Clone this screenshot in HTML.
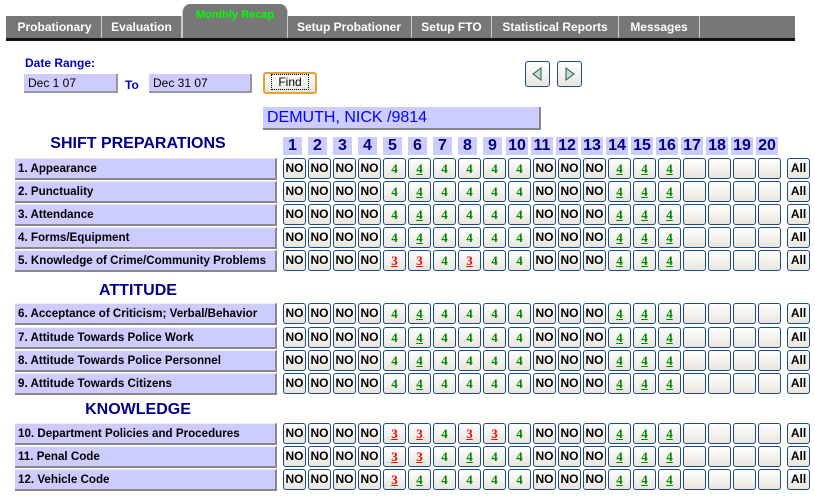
<!DOCTYPE html>
<html><head><meta charset="utf-8"><style>
body{margin:0;width:815px;height:497px;background:#fff;position:relative;overflow:hidden;font-family:"Liberation Sans",sans-serif}
.a{position:absolute}
.tabbar{left:6px;top:16px;width:789px;height:22px;background:#777;border-bottom:3px solid #111}
.tab{position:absolute;top:16px;height:22px;color:#fff;font-weight:bold;font-size:12px;line-height:22px;text-align:center;border-right:1px solid #ccc}
.lbl{position:absolute;left:15px;width:257px;height:19px;background:#ccf;border-right:2px solid #888;border-bottom:2px solid #888;border-top:1px solid #eee;font-weight:bold;font-size:11.6px;line-height:19px;padding-left:3px;box-sizing:content-box;color:#000;white-space:nowrap}
.row{position:absolute;left:283px;display:flex;gap:2px}
.row b{display:block;width:21px;height:19px;border:1px solid #1c4a86;border-radius:3px;background:linear-gradient(#fff,#e8e6dc);text-align:center;line-height:19px;font-size:12px;font-weight:bold}
.n{font-family:"Liberation Sans",sans-serif;color:#000}
.g{font-family:"Liberation Serif",serif;color:#080;font-size:13px!important}
.u{text-decoration:underline}
.r{font-family:"Liberation Serif",serif;color:#f00;text-decoration:underline;font-size:13px!important}
.all{position:absolute;left:787px;width:21px;height:19px;border:1px solid #1c4a86;border-radius:3px;background:linear-gradient(#fff,#e8e6dc);text-align:center;line-height:19px;font-size:12px;font-weight:bold}
.hd{position:absolute;color:#00008b;font-weight:bold;font-size:16px;text-align:center;width:240px;left:18px}
.cn{position:absolute;top:137px;height:18px;background:#ccf;color:#000080;font-weight:bold;font-size:16px;line-height:18px;text-align:center;width:19px}
.inp{position:absolute;top:74px;height:19px;background:#ccf;border-right:2px solid #999;border-bottom:2px solid #999;font-size:12px;line-height:19px;padding-left:4px;box-sizing:border-box}
.arr{position:absolute;top:61px;width:23px;height:24px;border:1px solid #1c4a86;border-radius:3px;background:linear-gradient(#fff,#e8e6dc)}
</style></head><body>
<div class="a tabbar"></div>
<div class="tab" style="left:8px;width:93px">Probationary</div>
<div class="tab" style="left:102px;width:79px">Evaluation</div>
<div class="a" style="left:182px;top:4px;width:104px;height:34px;background:#777;border-radius:8px 8px 0 0;border-right:1px solid #ccc;border-left:1px solid #ccc;color:#0f0;font-weight:bold;font-size:11px;text-align:center;line-height:22px">Monthly Recap</div>
<div class="tab" style="left:287px;width:124px">Setup Probationer</div>
<div class="tab" style="left:412px;width:79px">Setup FTO</div>
<div class="tab" style="left:492px;width:126px">Statistical Reports</div>
<div class="tab" style="left:619px;width:80px">Messages</div>

<div class="a" style="left:25px;top:56px;color:#00c;font-weight:bold;font-size:12px">Date Range:</div>
<div class="inp" style="left:24px;width:94px">Dec 1 07</div>
<div class="a" style="left:125px;top:78px;color:#00c;font-weight:bold;font-size:12px">To</div>
<div class="inp" style="left:149px;width:103px">Dec 31 07</div>
<div class="a" style="left:263px;top:72px;width:50px;height:18px;border:2px solid #e8a030;border-radius:3px;background:linear-gradient(#fff,#e8e6dc);font-size:12px;text-align:center;line-height:17px"><span style="border:1px dotted #000;padding:0 6px">Find</span></div>
<div class="arr" style="left:525px"><svg width="23" height="24"><path d="M15 6 L7 12 L15 18 Z" fill="#bfe0bf" stroke="#355" stroke-width="1"/></svg></div>
<div class="arr" style="left:557px"><svg width="23" height="24"><path d="M8 6 L16 12 L8 18 Z" fill="#bfe0bf" stroke="#355" stroke-width="1"/></svg></div>

<div class="a" style="left:263px;top:107px;height:21px;background:#ccf;border-right:2px solid #888;border-bottom:2px solid #888;color:#00f;font-size:16px;line-height:21px;padding-left:4px;box-sizing:content-box;width:272px">DEMUTH, NICK /9814</div>

<div class="hd" style="top:135px">SHIFT PREPARATIONS</div>
<div class="hd" style="top:282px">ATTITUDE</div>
<div class="hd" style="top:401px">KNOWLEDGE</div>

<div class="cn" style="left:283px">1</div><div class="cn" style="left:308px">2</div><div class="cn" style="left:333px">3</div><div class="cn" style="left:358px">4</div><div class="cn" style="left:383px">5</div><div class="cn" style="left:408px">6</div><div class="cn" style="left:433px">7</div><div class="cn" style="left:458px">8</div><div class="cn" style="left:483px">9</div><div class="cn" style="left:506px;width:22px">10</div><div class="cn" style="left:531px;width:22px">11</div><div class="cn" style="left:556px;width:22px">12</div><div class="cn" style="left:581px;width:22px">13</div><div class="cn" style="left:606px;width:22px">14</div><div class="cn" style="left:631px;width:22px">15</div><div class="cn" style="left:656px;width:22px">16</div><div class="cn" style="left:681px;width:22px">17</div><div class="cn" style="left:706px;width:22px">18</div><div class="cn" style="left:731px;width:22px">19</div><div class="cn" style="left:756px;width:22px">20</div>

<div class="lbl" style="top:158px">1. Appearance</div>
<div class="row" style="top:158px"><b class="n">NO</b><b class="n">NO</b><b class="n">NO</b><b class="n">NO</b><b class="g">4</b><b class="g u">4</b><b class="g">4</b><b class="g">4</b><b class="g">4</b><b class="g">4</b><b class="n">NO</b><b class="n">NO</b><b class="n">NO</b><b class="g u">4</b><b class="g u">4</b><b class="g u">4</b><b></b><b></b><b></b><b></b></div>
<div class="all" style="top:158px">All</div>

<div class="lbl" style="top:181px">2. Punctuality</div>
<div class="row" style="top:181px"><b class="n">NO</b><b class="n">NO</b><b class="n">NO</b><b class="n">NO</b><b class="g">4</b><b class="g u">4</b><b class="g">4</b><b class="g">4</b><b class="g">4</b><b class="g">4</b><b class="n">NO</b><b class="n">NO</b><b class="n">NO</b><b class="g u">4</b><b class="g u">4</b><b class="g u">4</b><b></b><b></b><b></b><b></b></div>
<div class="all" style="top:181px">All</div>

<div class="lbl" style="top:204px">3. Attendance</div>
<div class="row" style="top:204px"><b class="n">NO</b><b class="n">NO</b><b class="n">NO</b><b class="n">NO</b><b class="g">4</b><b class="g u">4</b><b class="g">4</b><b class="g">4</b><b class="g">4</b><b class="g">4</b><b class="n">NO</b><b class="n">NO</b><b class="n">NO</b><b class="g u">4</b><b class="g u">4</b><b class="g u">4</b><b></b><b></b><b></b><b></b></div>
<div class="all" style="top:204px">All</div>

<div class="lbl" style="top:227px">4. Forms/Equipment</div>
<div class="row" style="top:227px"><b class="n">NO</b><b class="n">NO</b><b class="n">NO</b><b class="n">NO</b><b class="g">4</b><b class="g u">4</b><b class="g">4</b><b class="g">4</b><b class="g">4</b><b class="g">4</b><b class="n">NO</b><b class="n">NO</b><b class="n">NO</b><b class="g u">4</b><b class="g u">4</b><b class="g u">4</b><b></b><b></b><b></b><b></b></div>
<div class="all" style="top:227px">All</div>

<div class="lbl" style="top:250px">5. Knowledge of Crime/Community Problems</div>
<div class="row" style="top:250px"><b class="n">NO</b><b class="n">NO</b><b class="n">NO</b><b class="n">NO</b><b class="r">3</b><b class="r">3</b><b class="g">4</b><b class="r">3</b><b class="g">4</b><b class="g">4</b><b class="n">NO</b><b class="n">NO</b><b class="n">NO</b><b class="g u">4</b><b class="g u">4</b><b class="g u">4</b><b></b><b></b><b></b><b></b></div>
<div class="all" style="top:250px">All</div>

<div class="lbl" style="top:303px">6. Acceptance of Criticism; Verbal/Behavior</div>
<div class="row" style="top:303px"><b class="n">NO</b><b class="n">NO</b><b class="n">NO</b><b class="n">NO</b><b class="g">4</b><b class="g u">4</b><b class="g">4</b><b class="g">4</b><b class="g">4</b><b class="g">4</b><b class="n">NO</b><b class="n">NO</b><b class="n">NO</b><b class="g u">4</b><b class="g u">4</b><b class="g u">4</b><b></b><b></b><b></b><b></b></div>
<div class="all" style="top:303px">All</div>

<div class="lbl" style="top:327px">7. Attitude Towards Police Work</div>
<div class="row" style="top:327px"><b class="n">NO</b><b class="n">NO</b><b class="n">NO</b><b class="n">NO</b><b class="g">4</b><b class="g u">4</b><b class="g">4</b><b class="g">4</b><b class="g">4</b><b class="g">4</b><b class="n">NO</b><b class="n">NO</b><b class="n">NO</b><b class="g u">4</b><b class="g u">4</b><b class="g u">4</b><b></b><b></b><b></b><b></b></div>
<div class="all" style="top:327px">All</div>

<div class="lbl" style="top:350px">8. Attitude Towards Police Personnel</div>
<div class="row" style="top:350px"><b class="n">NO</b><b class="n">NO</b><b class="n">NO</b><b class="n">NO</b><b class="g">4</b><b class="g u">4</b><b class="g">4</b><b class="g">4</b><b class="g">4</b><b class="g">4</b><b class="n">NO</b><b class="n">NO</b><b class="n">NO</b><b class="g u">4</b><b class="g u">4</b><b class="g u">4</b><b></b><b></b><b></b><b></b></div>
<div class="all" style="top:350px">All</div>

<div class="lbl" style="top:373px">9. Attitude Towards Citizens</div>
<div class="row" style="top:373px"><b class="n">NO</b><b class="n">NO</b><b class="n">NO</b><b class="n">NO</b><b class="g">4</b><b class="g u">4</b><b class="g">4</b><b class="g">4</b><b class="g">4</b><b class="g">4</b><b class="n">NO</b><b class="n">NO</b><b class="n">NO</b><b class="g u">4</b><b class="g u">4</b><b class="g u">4</b><b></b><b></b><b></b><b></b></div>
<div class="all" style="top:373px">All</div>

<div class="lbl" style="top:423px">10. Department Policies and Procedures</div>
<div class="row" style="top:423px"><b class="n">NO</b><b class="n">NO</b><b class="n">NO</b><b class="n">NO</b><b class="r">3</b><b class="r">3</b><b class="g">4</b><b class="r">3</b><b class="r">3</b><b class="g">4</b><b class="n">NO</b><b class="n">NO</b><b class="n">NO</b><b class="g u">4</b><b class="g u">4</b><b class="g u">4</b><b></b><b></b><b></b><b></b></div>
<div class="all" style="top:423px">All</div>

<div class="lbl" style="top:446px">11. Penal Code</div>
<div class="row" style="top:446px"><b class="n">NO</b><b class="n">NO</b><b class="n">NO</b><b class="n">NO</b><b class="r">3</b><b class="r">3</b><b class="g">4</b><b class="g u">4</b><b class="g">4</b><b class="g">4</b><b class="n">NO</b><b class="n">NO</b><b class="n">NO</b><b class="g u">4</b><b class="g u">4</b><b class="g u">4</b><b></b><b></b><b></b><b></b></div>
<div class="all" style="top:446px">All</div>

<div class="lbl" style="top:469px">12. Vehicle Code</div>
<div class="row" style="top:469px"><b class="n">NO</b><b class="n">NO</b><b class="n">NO</b><b class="n">NO</b><b class="r">3</b><b class="g u">4</b><b class="g">4</b><b class="g">4</b><b class="g">4</b><b class="g">4</b><b class="n">NO</b><b class="n">NO</b><b class="n">NO</b><b class="g u">4</b><b class="g u">4</b><b class="g u">4</b><b></b><b></b><b></b><b></b></div>
<div class="all" style="top:469px">All</div>
</body></html>
